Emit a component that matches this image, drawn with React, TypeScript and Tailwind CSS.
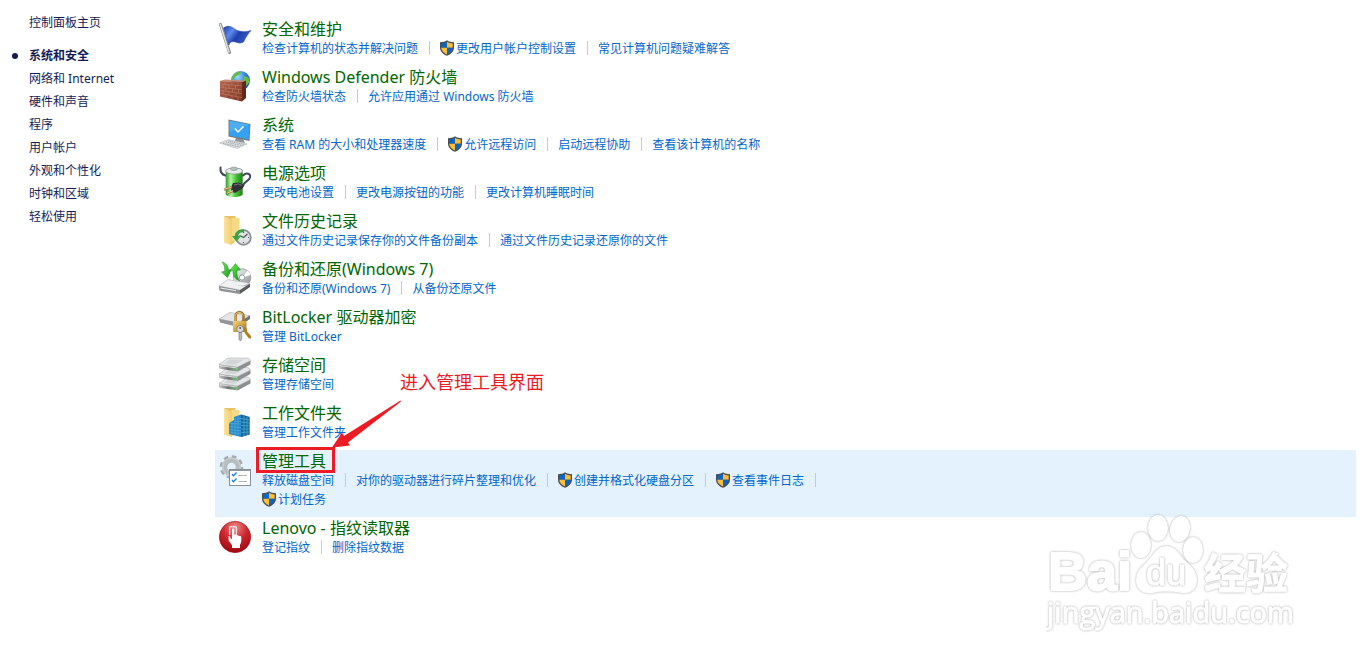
import type { ReactNode } from "react";

type TaskLink = { label: string; shield?: boolean };

type Category = {
  title: string;
  icon: ReactNode;
  // one entry per line of links
  links: TaskLink[][];
  active?: boolean;
};

const NAV_ITEMS = [
  "系统和安全",
  "网络和 Internet",
  "硬件和声音",
  "程序",
  "用户帐户",
  "外观和个性化",
  "时钟和区域",
  "轻松使用",
];

function IconDefs() {
  return (
    <svg className="absolute h-0 w-0" aria-hidden="true">
      <defs>
        <linearGradient id="flagBlue" x1="0" y1="0" x2="1" y2="0.5">
          <stop offset="0" stopColor="#1d3fa8" />
          <stop offset="0.35" stopColor="#5d8bee" />
          <stop offset="0.6" stopColor="#1f3fae" />
          <stop offset="1" stopColor="#3b5cc4" />
        </linearGradient>
        <linearGradient id="metal" x1="0" y1="0" x2="1" y2="1">
          <stop offset="0" stopColor="#fafafa" />
          <stop offset="0.5" stopColor="#c4c6c8" />
          <stop offset="1" stopColor="#85888b" />
        </linearGradient>
        <linearGradient id="side" x1="0" y1="0" x2="1" y2="0">
          <stop offset="0" stopColor="#c4c6c7" />
          <stop offset="0.5" stopColor="#6d7073" />
          <stop offset="1" stopColor="#a9abad" />
        </linearGradient>
        <radialGradient id="globe" cx="0.35" cy="0.3" r="0.8">
          <stop offset="0" stopColor="#a5dcff" />
          <stop offset="0.55" stopColor="#2b7fdc" />
          <stop offset="1" stopColor="#0b3f94" />
        </radialGradient>
        <linearGradient id="brick" x1="0" y1="0" x2="1" y2="1">
          <stop offset="0" stopColor="#b5664e" />
          <stop offset="1" stopColor="#7f3423" />
        </linearGradient>
        <linearGradient id="battery" x1="0" y1="0" x2="1" y2="0">
          <stop offset="0" stopColor="#2b9a26" />
          <stop offset="0.3" stopColor="#b2f3a0" />
          <stop offset="0.6" stopColor="#45c53a" />
          <stop offset="1" stopColor="#1c7d1a" />
        </linearGradient>
        <linearGradient id="folder" x1="0" y1="0" x2="1" y2="0">
          <stop offset="0" stopColor="#fbe39b" />
          <stop offset="1" stopColor="#f3cf74" />
        </linearGradient>
        <linearGradient id="green" x1="0" y1="0" x2="1" y2="1">
          <stop offset="0" stopColor="#74ee5c" />
          <stop offset="1" stopColor="#13961a" />
        </linearGradient>
        <linearGradient id="gold" x1="0" y1="0" x2="1" y2="1">
          <stop offset="0" stopColor="#f2d587" />
          <stop offset="0.5" stopColor="#d5a43e" />
          <stop offset="1" stopColor="#8f671c" />
        </linearGradient>
        <radialGradient id="redBall" cx="0.5" cy="0.2" r="0.85">
          <stop offset="0" stopColor="#eb8e8c" />
          <stop offset="0.45" stopColor="#cf2730" />
          <stop offset="1" stopColor="#96040c" />
        </radialGradient>
      </defs>
    </svg>
  );
}

function Svg({ children }: { children: ReactNode }) {
  return (
    <svg viewBox="0 0 32 32" className="block h-8 w-8 overflow-visible" aria-hidden="true">
      {children}
    </svg>
  );
}

function FlagIcon() {
  return (
    <Svg>
      <path d="M1.5 2.5 10.5 30.5" stroke="#85888c" strokeWidth="3" strokeLinecap="round" />
      <path d="M1.3 2.5 10 30" stroke="#e3e5e7" strokeWidth="1.4" strokeLinecap="round" />
      <path
        d="M4.5 6C9 3 12 4.500 15.500 7C20 10 26 10.500 32 8.500C29 11 26.500 16 24.500 20C20 22.500 17 19.500 14 19.500C12 19.500 10.500 21 9.800 23Z"
        fill="url(#flagBlue)"
        stroke="#24409c"
        strokeWidth="0.6"
      />
    </Svg>
  );
}

function FirewallIcon() {
  return (
    <Svg>
      <circle cx="21.500" cy="10.500" r="9.500" fill="url(#globe)" />
      <path d="M14.500 5C17 1.500 20 1 22 2L20 5L17 6L14 10L12.500 9ZM25 6L29.500 7.500L31 12L27 16L24 11Z" fill="#62bd46" />
      <path d="M23 12 27 10.500V28L23 31.500Z" fill="#64281b" />
      <path d="M1 11 6 9.500 27 10.500 23 12Z" fill="#c98a74" />
      <path d="M1 11 23 12V31.500L1 26.500Z" fill="url(#brick)" />
      <path
        d="M1 14.100 23 15.900M1 17.200 23 19.800M1 20.300 23 23.700M1 23.400 23 27.600M6 11.200V14.500M13 11.600V15M19 11.800V15.500M4 14.500V17.500M10 15V18.300M16.500 15.400V19M7 18V21.200M13.500 18.700V22.200M19.500 19.400V23M4 20.800V24M10 21.800V25M17 22.800V26.500M7 24.500V27.800M13 25.700V29.200M19 26.900V30.500"
        stroke="#c48a75"
        strokeWidth="0.5"
        fill="none"
      />
    </Svg>
  );
}

function SystemIcon() {
  return (
    <Svg>
      <path d="M17 19 24 21 26 25 16 23Z" fill="#8b9399" />
      <path d="M9.500 1.500 31.500 6 30.500 23 9.500 18.500Z" fill="#6f7a82" />
      <path d="M10.500 2.700 30.500 6.800 29.600 21.600 10.500 17.400Z" fill="#36a1ee" />
      <path d="M10.500 2.700 30.500 6.800 10.500 14Z" fill="#4dadf2" />
      <path d="M16 10.500 19 14 24.500 8.500" fill="none" stroke="#fff" strokeWidth="1.500" />
      <path d="M.5 25 9.500 21.500 28 26 18 30.500Z" fill="#dfe2e4" stroke="#a4a9ad" strokeWidth="0.5" />
      <path d="M4 25.300 20.500 29M7 24 23.500 27.800M9.500 22.900 25.500 26.600" stroke="#8f969b" strokeWidth="0.8" strokeDasharray="1.200 0.600" />
    </Svg>
  );
}

function PowerIcon() {
  return (
    <Svg>
      <path d="M1.500 1.500C1 6 2.500 8.500 6.500 9.500M24 9.500C27 6.500 32 7 31 11.500C30 15.500 25 15 24 20" fill="none" stroke="#43475a" strokeWidth="2" strokeLinecap="round" />
      <path d="M6.700 5C6.700 1 23.700 1 23.700 5V28C23.700 32 6.700 32 6.700 28Z" fill="url(#battery)" />
      <path d="M6.700 5C6.700 1 23.700 1 23.700 5C23.700 9 6.700 9 6.700 5Z" fill="#e7eaeb" stroke="#8d9295" strokeWidth="0.7" />
      <ellipse cx="15" cy="2.800" rx="3.500" ry="1.800" fill="#aebfc8" stroke="#7e878c" strokeWidth="0.5" />
      <path d="M12 21.500 14 17 20 16.500 25 19 24 22 16 27 12.500 25.500Z" fill="#303238" />
      <path d="M15 19 19.500 18 23 19.500" stroke="#85888c" strokeWidth="0.8" fill="none" />
      <path d="M12.500 21.500 5 23.500M14 25 8 27.500" stroke="#94703a" strokeWidth="2.400" />
      <path d="M12.500 21.200 5 23.200M14 24.700 8 27.200" stroke="#f0d9a0" strokeWidth="1" />
    </Svg>
  );
}

function FolderShape() {
  return (
    <>
      <path d="M5 2H16.500V27L12.500 30.500 5 28Z" fill="#e9c162" />
      <path d="M12.500 4H20.500V27H12.500Z" fill="#f7da88" />
      <path d="M5 2 12.500 6V31L5 28.500Z" fill="url(#folder)" />
    </>
  );
}

function FileHistoryIcon() {
  return (
    <Svg>
      <FolderShape />
      <circle cx="24.500" cy="23.500" r="7.300" fill="#dfe3e4" stroke="#8b9092" strokeWidth="1.800" />
      <path d="M24.500 23.500 20.500 21.500M24.500 23.500 28.500 20M24.500 29V28M24.500 19V18M20 23.500H19M30 23.500H29" stroke="#505557" strokeWidth="1.200" fill="none" />
      <path d="M25 15.300C19.500 15 16 18 15.800 22H13L17.500 27.500 22 22H19.200C19.500 19.500 21.500 18 25 18Z" fill="#37a447" />
    </Svg>
  );
}

function BackupIcon() {
  return (
    <Svg>
      <circle cx="23" cy="15.500" r="8.800" fill="url(#metal)" stroke="#85898c" strokeWidth="0.7" />
      <path d="M23 15.500 28.500 8.800A8.800 8.800 0 0 1 31.500 13Z" fill="#fff" />
      <path d="M23 15.500 16 20 19 23.200Z" fill="#f4f4f4" />
      <path d="M0 24 9 17.500 17 19 31 21 21 28.500Z" fill="#f0f1f2" stroke="#9b9fa2" strokeWidth="0.5" />
      <path d="M14.300 15.500A8.700 8.700 0 0 0 31.700 15.500L31 19C28 23.500 22 25.500 17 22Z" fill="url(#metal)" />
      <circle cx="23" cy="15.500" r="2.600" fill="#fff" stroke="#85898c" strokeWidth="0.8" />
      <path d="M0 24 21 28V32L2 29Q0 28.500 0 27Z" fill="#8d9194" />
      <path d="M21 28 31 21.500V25L21 32Z" fill="#595d60" />
      <path d="M1.500 26 17 28.700" stroke="#eceeef" strokeWidth="1" />
      <path d="M3 0C7 1 9.500 4 9.500 8L12.500 7.500 8.500 15.500 2.500 10 5.700 9.300C6 5 5 2.500 3 0Z" fill="url(#green)" stroke="#178c1c" strokeWidth="0.5" />
      <path d="M21 19C15.500 17 13.500 13 14 8.500L11 8.500 16.500 1.500 21.500 8 18 8.200C17.500 13 18.500 16 21 19Z" fill="url(#green)" stroke="#178c1c" strokeWidth="0.5" />
    </Svg>
  );
}

function BitLockerIcon() {
  return (
    <Svg>
      <path d="M0 9 11 2.500 31 5.500 19 13Z" fill="#e3e5e6" stroke="#96999b" strokeWidth="0.5" />
      <path d="M0 9 19 12.500V17L1 12.500Z" fill="#929597" />
      <path d="M19 13 31 5.500V9L19 17Z" fill="#6f7375" />
      <path d="M16.500 12V6.500C16.500.5 24.500.5 24.500 6.500V12" fill="none" stroke="#a27727" strokeWidth="2.600" />
      <path d="M16.200 12V6.500C16.500 1.500 23 1 24 5.500" fill="none" stroke="#ebcb76" strokeWidth="0.9" />
      <rect x="14" y="11" width="13.500" height="11" rx="1" fill="url(#gold)" />
      <path d="M24 19C26 16 29 19 28 21.500L32 26V28.500H30L26 23.500Z" fill="#b18022" />
      <circle cx="21.200" cy="19" r="3.500" fill="#d5d8da" stroke="#777b7e" strokeWidth="0.8" />
      <circle cx="21.200" cy="18" r="1" fill="#555" />
      <path d="M20 22.500H22.700V29L21.500 31 20 29.500Z" fill="#b9bdbf" stroke="#696d70" strokeWidth="0.6" />
    </Svg>
  );
}

function StorageIcon() {
  return (
    <Svg>
      {[19, 9.5, 0].map((y) => (
        <g key={y} transform={`translate(0 ${y})`}>
          <path d="M0 6.500 19 9V13.500L1.500 11Q0 10.500 0 9.500Z" fill="url(#side)" />
          <path d="M18.500 9 31.500 2.500V6.500L18.500 13.500Z" fill="#8b8f92" />
          <path d="M0 6.500 9 0H28Q31 .5 31.500 2.500L18.500 9Z" fill="#e6e7e8" stroke="#9b9ea1" strokeWidth="0.5" />
          <path d="M5 6 10.500 1.500H25L16 6.800Z" fill="#d2d4d5" />
          <path d="M1 7.700 18 10" stroke="#f4f4f4" strokeWidth="0.8" />
          <rect x="15.500" y="9.800" width="2" height="2.600" fill="#39d936" />
        </g>
      ))}
    </Svg>
  );
}

function WorkFolderIcon() {
  return (
    <Svg>
      <FolderShape />
      <path d="M10 17 15 14V11L22 8.500 30.500 11V28.500L22 31 10 28Z" fill="#2487c4" />
      <path d="M22 8.500 30.500 11V28.500L22 31Z" fill="#176a9f" />
      <path d="M10 17.500 22 18M10 20.500 22 21.500M10 23.500 22 25M10 26 22 28M15 13 22 12.500M15 15.500 22 15.500M22 12.500 30.500 14M22 16 30.500 17M22 19.500 30.500 20M22 23 30.500 23M22 26.500 30.500 26M13 16V28.500M16 13V29.500M19 10V30M25 9.500V30M28 10.500V29" stroke="#5bb4e2" strokeWidth="0.6" fill="none" />
    </Svg>
  );
}

function AdminToolsIcon() {
  return (
    <Svg>
      <circle cx="12.500" cy="13" r="9.800" fill="none" stroke="#a5abaf" strokeWidth="4" strokeDasharray="4.300 3.400" />
      <circle cx="12.500" cy="13" r="7" fill="none" stroke="#b8bdc0" strokeWidth="5.500" />
      <circle cx="12.500" cy="13" r="8.800" fill="none" stroke="#d5d9db" strokeWidth="0.8" />
      <rect x="10.500" y="15.500" width="21" height="16" fill="#fff" stroke="#868e93" />
      <path d="M10.500 16H31.500" stroke="#868e93" strokeWidth="1.800" />
      <path d="M13 20 14.500 21.800 17.500 18.500M13 26 14.500 27.800 17.500 24.500" fill="none" stroke="#1683d9" strokeWidth="1.300" />
      <path d="M19.500 21.500H28M19.500 27.500H28" stroke="#aeb4b8" />
    </Svg>
  );
}

function FingerprintIcon() {
  return (
    <Svg>
      <circle cx="16" cy="16" r="15.700" fill="url(#redBall)" stroke="#a70e16" strokeWidth="0.6" />
      <path d="M10.700 14V5.800H17.300V14" fill="none" stroke="#fff" strokeWidth="1" />
      <path
        d="M13 18V8.500C13 7.300 15.300 7.300 15.300 8.500V14C16 13.300 17.500 13.500 17.700 14.500C18.500 13.900 19.800 14.300 20 15.200C21 14.800 22.300 15.200 22.300 16.500V20C22.300 22 21 23 21 24V27H13V24C11.500 22 9.500 20 9.500 18.500V15C10.800 14.500 11.500 16 11.700 17.500Z"
        fill="#fff"
      />
    </Svg>
  );
}

function ShieldIcon() {
  return (
    <svg viewBox="0 0 16 16" className="-mt-0.5 -ml-px block h-4 w-[17px] shrink-0" aria-hidden="true">
      <path d="M7.500.3C9.500 1.700 11.800 2.200 14.500 2.300V7.500C14.500 11.500 11.500 14.200 7.500 15.800C3.500 14.200.5 11.500.5 7.500V2.300C3.200 2.200 5.500 1.700 7.500.3Z" fill="#4b4f52" />
      <path d="M7.500 1.800V7.700H1.800V3.400C4 3.300 5.800 2.800 7.500 1.800Z" fill="#0b65c2" />
      <path d="M7.500 1.800C9.200 2.800 11 3.300 13.200 3.400V7.700H7.500Z" fill="#fdbd35" />
      <path d="M1.800 7.700H7.500V14.400C4.300 13 2 10.800 1.800 7.700Z" fill="#fdbd35" />
      <path d="M13.200 7.700H7.500V14.400C10.700 13 13 10.800 13.200 7.700Z" fill="#0b65c2" />
    </svg>
  );
}

const CATEGORIES: Category[] = [
  {
    title: "安全和维护",
    icon: <FlagIcon />,
    links: [
      [
        { label: "检查计算机的状态并解决问题" },
        { label: "更改用户帐户控制设置", shield: true },
        { label: "常见计算机问题疑难解答" },
      ],
    ],
  },
  {
    title: "Windows Defender 防火墙",
    icon: <FirewallIcon />,
    links: [[{ label: "检查防火墙状态" }, { label: "允许应用通过 Windows 防火墙" }]],
  },
  {
    title: "系统",
    icon: <SystemIcon />,
    links: [
      [
        { label: "查看 RAM 的大小和处理器速度" },
        { label: "允许远程访问", shield: true },
        { label: "启动远程协助" },
        { label: "查看该计算机的名称" },
      ],
    ],
  },
  {
    title: "电源选项",
    icon: <PowerIcon />,
    links: [[{ label: "更改电池设置" }, { label: "更改电源按钮的功能" }, { label: "更改计算机睡眠时间" }]],
  },
  {
    title: "文件历史记录",
    icon: <FileHistoryIcon />,
    links: [[{ label: "通过文件历史记录保存你的文件备份副本" }, { label: "通过文件历史记录还原你的文件" }]],
  },
  {
    title: "备份和还原(Windows 7)",
    icon: <BackupIcon />,
    links: [[{ label: "备份和还原(Windows 7)" }, { label: "从备份还原文件" }]],
  },
  {
    title: "BitLocker 驱动器加密",
    icon: <BitLockerIcon />,
    links: [[{ label: "管理 BitLocker" }]],
  },
  {
    title: "存储空间",
    icon: <StorageIcon />,
    links: [[{ label: "管理存储空间" }]],
  },
  {
    title: "工作文件夹",
    icon: <WorkFolderIcon />,
    links: [[{ label: "管理工作文件夹" }]],
  },
  {
    title: "管理工具",
    icon: <AdminToolsIcon />,
    active: true,
    links: [
      [
        { label: "释放磁盘空间" },
        { label: "对你的驱动器进行碎片整理和优化" },
        { label: "创建并格式化硬盘分区", shield: true },
        { label: "查看事件日志", shield: true },
      ],
      [{ label: "计划任务", shield: true }],
    ],
  },
  {
    title: "Lenovo - 指纹读取器",
    icon: <FingerprintIcon />,
    links: [[{ label: "登记指纹" }, { label: "删除指纹数据" }]],
  },
];

function Sidebar() {
  return (
    <nav className="w-[215px] shrink-0 pt-[11px] pl-[29px] text-xs leading-[23px] text-[#151c55]">
      <a href="#home" className="block">
        控制面板主页
      </a>
      <ul className="mt-[10px]">
        {NAV_ITEMS.map((item, i) => (
          <li key={item} className="relative">
            {i === 0 && (
              <span className="absolute top-[9px] -left-[17px] h-1.5 w-1.5 rounded-full bg-[#151c55]" />
            )}
            <a href="#nav" className={i === 0 ? "font-bold" : ""}>
              {item}
            </a>
          </li>
        ))}
      </ul>
    </nav>
  );
}

function Divider() {
  return <span className="mx-[10px] -mt-px h-[14px] w-px bg-[#cacaca]" />;
}

function Callout() {
  return (
    <div className="pointer-events-none absolute bottom-full left-[109px] text-[#ed1c24]">
      <p className="pl-[76px] text-lg leading-6 whitespace-nowrap">进入管理工具界面</p>
      <svg width="80" height="56" viewBox="0 0 80 56" className="block" aria-hidden="true">
        <path d="M76.500 6.500 77 7.500 24 48.500 26 51.500 8 53.500 18 38.500 20 42Z" fill="currentColor" />
      </svg>
    </div>
  );
}

function CategoryRow({ title, icon, links, active }: Category) {
  return (
    <li className={active ? "relative flex bg-[#e4f2fe] pl-1" : "flex pl-1"}>
      <div className="mt-1 w-[43px] shrink-0">{icon}</div>
      <div className="pt-px pb-2">
        <h2 className="relative w-fit text-base leading-5 text-[#006600]">
          <a href="#category">{title}</a>
          {active && (
            <span className="absolute -top-1 -right-[9px] -bottom-[2px] -left-[6px] border-3 border-[#ed1c24]" />
          )}
        </h2>
        {links.map((line, i) => (
          <div key={i} className="flex h-[19px] items-center text-xs text-[#0066cc]">
            {line.map((link, j) => (
              <span key={link.label} className="flex items-center pr-px whitespace-nowrap">
                {j > 0 && <Divider />}
                <a href="#task" className="flex items-center">
                  {link.shield && <ShieldIcon />}
                  {link.label}
                </a>
              </span>
            ))}
            {i < links.length - 1 && <Divider />}
          </div>
        ))}
      </div>
      {active && <Callout />}
    </li>
  );
}

function Watermark() {
  return (
    <svg
      width="250"
      height="124"
      viewBox="0 0 250 124"
      className="pointer-events-none absolute right-[70px] bottom-[26px] [font-family:'Liberation_Sans','Noto_Sans_CJK_SC',sans-serif]"
      fill="#fff"
      stroke="#fff"
      strokeWidth="2"
      strokeLinejoin="round"
    >
      <g className="drop-shadow-[0_0_1px_#a8a8a8]">
        <text x="2" y="78" fontSize="54" fontWeight="700">
          Bai
        </text>
        <ellipse cx="95" cy="33" rx="9" ry="12" />
        <ellipse cx="112" cy="16" rx="9" ry="12" />
        <ellipse cx="134" cy="17" rx="9" ry="12" transform="rotate(12 134 17)" />
        <ellipse cx="147" cy="38" rx="9" ry="12" />
        <path d="M120 35C128 35 132 41 137 48C143 54 150 58 150 68C150 77 144 81 136 80C125 78 116 78 106 80C96 81 91 76 91 68C91 58 98 55 104 48C109 42 112 35 120 35Z" />
      </g>
      <g className="drop-shadow-[0_0_1px_#a8a8a8]">
        <text x="100" y="73" fontSize="36" strokeWidth="1">
          du
        </text>
        <text x="158" y="77" fontSize="42" fontWeight="700" strokeWidth="1">
          经验
        </text>
        <text x="1" y="111" fontSize="29" strokeWidth="1" className="[font-family:'Open_Sans',sans-serif]">
          jingyan.baidu.com
        </text>
      </g>
    </svg>
  );
}

export default function App() {
  return (
    <div className="relative flex min-h-screen bg-white [font-family:'Noto_Sans','Noto_Sans_CJK_SC',sans-serif]">
      <IconDefs />
      <Sidebar />
      <main className="mr-[10px] min-w-0 flex-1 pt-[18px]">
        <ul>
          {CATEGORIES.map((category) => (
            <CategoryRow key={category.title} {...category} />
          ))}
        </ul>
      </main>
      <Watermark />
    </div>
  );
}
